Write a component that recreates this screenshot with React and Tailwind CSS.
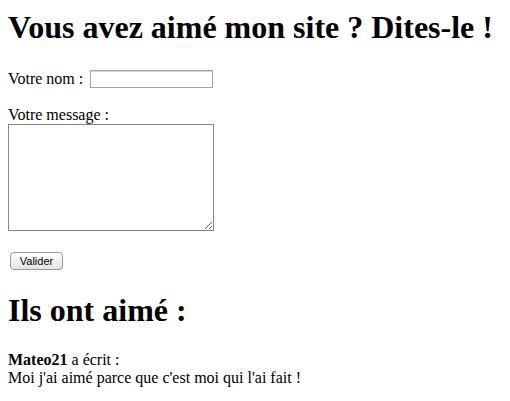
export default function App() {
  return (
    <div
      className="min-h-[401px] bg-white px-2 pt-[9px] text-black text-base leading-[normal]"
      style={{ fontFamily: '"Liberation Serif", "Times New Roman", serif' }}
    >
      <h1 className="text-[32px] font-bold leading-[normal]">
        Vous avez aimé mon site ? Dites-le !
      </h1>

      <form className="mt-[24px]">
        <p className="flex items-center">
          <label htmlFor="pseudo">Votre nom :</label>
          <input
            id="pseudo"
            type="text"
            className="ml-[7px] w-[123px] h-[18px] border border-[#a5a5a5] bg-white shadow-[inset_0_1px_0_#d6d6d6] outline-none"
          />
        </p>

        <p className="mt-[18px]">
          <label htmlFor="message">Votre message :</label>
          <br />
          <textarea
            id="message"
            className="block w-[206px] h-[107px] border border-[#868686] bg-white outline-none resize"
          />
        </p>

        <p className="mt-[21px] flex">
          <button
            type="button"
            className="ml-[2px] w-[53px] h-[18px] rounded-[4px] border border-[#9a9a9a] bg-gradient-to-b from-white to-[#e4e4e4] text-[11px] leading-none text-black"
            style={{ fontFamily: '"Liberation Sans", Arial, sans-serif' }}
          >
            Valider
          </button>
        </p>
      </form>

      <h2 className="mt-[22px] text-[32px] font-bold leading-[normal]">Ils ont aimé :</h2>

      <p className="mt-[22px] leading-[18px]">
        <strong>Mateo21</strong> a écrit :
        <br />
        Moi j'ai aimé parce que c'est moi qui l'ai fait !
      </p>
    </div>
  );
}
